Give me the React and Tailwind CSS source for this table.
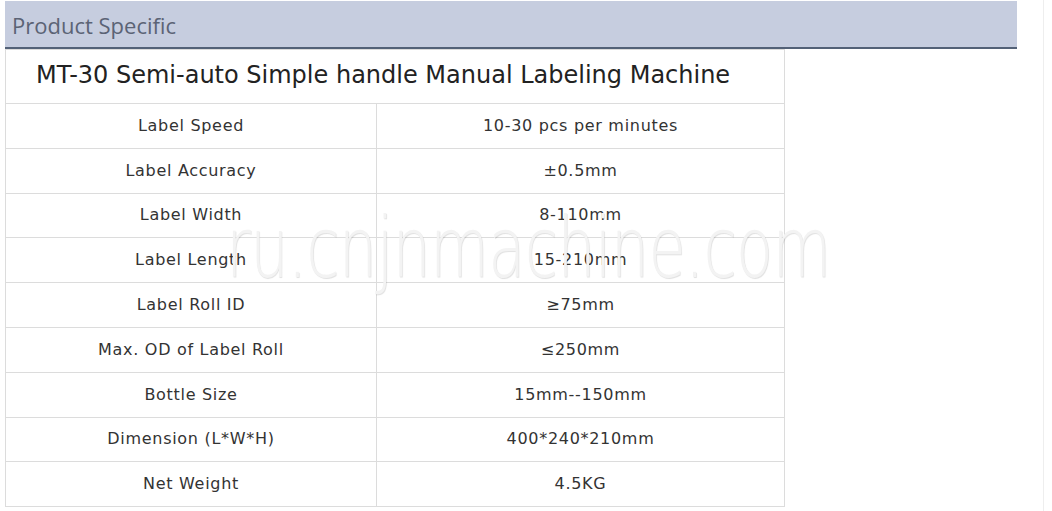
import React from "react";

const specs = [
  ["Label Speed", "10-30 pcs per minutes"],
  ["Label Accuracy", "±0.5mm"],
  ["Label Width", "8-110mm"],
  ["Label Length", "15-210mm"],
  ["Label Roll ID", "≥75mm"],
  ["Max. OD of Label Roll", "≤250mm"],
  ["Bottle Size", "15mm--150mm"],
  ["Dimension (L*W*H)", "400*240*210mm"],
  ["Net Weight", "4.5KG"],
];

const App = () => {
  return (
    <div className="relative w-[1052px] h-[511px] bg-white overflow-hidden" style={{ fontFamily: "'DejaVu Sans', sans-serif" }}>
      <div className="flex">
        <div className="ml-[5px] mt-[1px] w-[1012px]">
          <div className="h-[48px] bg-[#c6cddf] border-b-2 border-[#536177] flex items-center pl-[7px] pt-[3px]">
            <span className="text-[22px] text-[#5b6375] font-['Open_Sans',sans-serif]">Product Specific</span>
          </div>
          <table className="w-[780px] border-collapse text-[#333] text-[16px] tracking-[0.7px]">
            <tbody>
              <tr>
                <td colSpan={2} className="h-[54px] border border-[#dcdcdc] pl-[30px] pb-[3px] text-[24px] tracking-normal text-[#222]">
                  MT-30 Semi-auto Simple handle Manual Labeling Machine
                </td>
              </tr>
              {specs.map(([k, v]) => (
                <tr key={k}>
                  <td className="w-[371px] h-[44.8px] border border-[#dcdcdc] text-center">{k}</td>
                  <td className="h-[44.8px] border border-[#dcdcdc] text-center">{v}</td>
                </tr>
              ))}
            </tbody>
          </table>
        </div>
        <div className="ml-[26px] w-px h-[511px] bg-[#eeeeee]" />
      </div>
      <div
        className="absolute left-[226px] top-[206px] text-[84px] leading-none text-[#f3f3f3] tracking-[-1px] font-['DejaVu_Sans',sans-serif] font-extralight pointer-events-none"
        style={{ textShadow: "1px 1px 1px rgba(0,0,0,0.12)", transform: "scaleX(0.72)", transformOrigin: "left" }}
      >
        ru.cnjnmachine.com
      </div>
    </div>
  );
};

export default App;
